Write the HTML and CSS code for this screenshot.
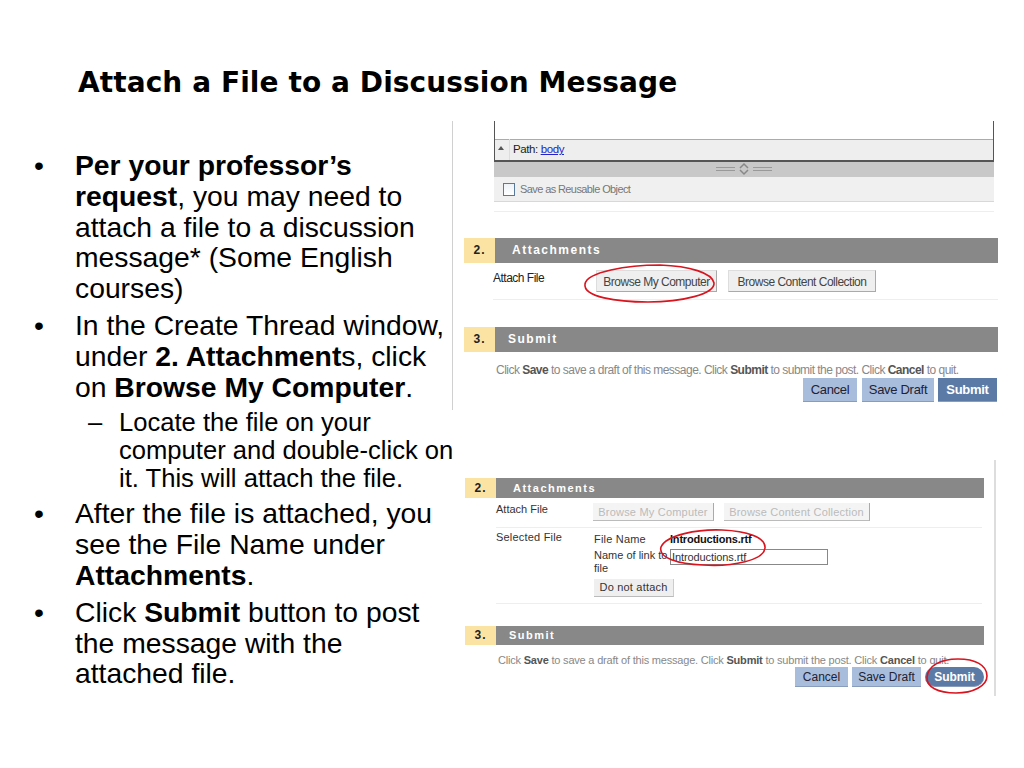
FILE: index.html
```html
<!DOCTYPE html>
<html lang="en">
<head>
<meta charset="utf-8">
<title>Attach a File to a Discussion Message</title>
<link rel="stylesheet" href="styles.css">
</head>
<body>
<main class="slide">
  <h1 class="title">Attach a File to a Discussion Message</h1>
  <div class="content">
    <ul class="bullets">
      <li><strong>Per your professor’s request</strong>, you may need to attach a file to a discussion message* (Some English courses)</li>
      <li>In the Create Thread window, under <strong>2. Attachment</strong>s, click on <strong>Browse My Computer</strong>.
        <ul class="sub"><li>Locate the file on your computer and double-click on it. This will attach the file.</li></ul>
      </li>
      <li>After the file is attached, you see the File Name under <strong>Attachments</strong>.</li>
      <li>Click <strong>Submit</strong> button to post the message with the attached file.</li>
    </ul>
  </div>

  <section class="shot shot-a">
    <div class="editor">
      <div class="path"><span class="tri"></span><span class="path-text">Path: <a>body</a></span></div>
      <div class="grip">
        <svg width="56" height="14" viewBox="0 0 56 14"><path d="M0 5.5h19M0 8.5h19M37 5.5h19M37 8.5h19" stroke="#999" fill="none"/><path d="M24 6l4-4 4 4M24 8l4 4 4-4" stroke="#888" stroke-width="1.5" fill="none"/></svg>
      </div>
      <div class="reuse"><span class="check"></span><span>Save as Reusable Object</span></div>
    </div>
    <div class="rule rule-a"></div>
    <div class="bar bar-a1"><span class="num">2.</span><span class="bar-title">Attachments</span></div>
    <div class="row-a"><span class="attach-label">Attach File</span><span class="btn btn-1">Browse My Computer</span><span class="btn btn-2">Browse Content Collection</span></div>
    <div class="bar bar-a2"><span class="num">3.</span><span class="bar-title t-sub">Submit</span></div>
    <p class="hint">Click <b>Save</b> to save a draft of this message. Click <b>Submit</b> to submit the post. Click <b>Cancel</b> to quit.</p>
    <div class="actions"><span class="act act-c">Cancel</span><span class="act act-s">Save Draft</span><span class="act act-p">Submit</span></div>
    <svg class="ring ring-a" width="136" height="42" viewBox="0 0 136 42"><path d="M3 21C5 9 45 2 78 2c30 1 52 8 54 18 1 11-32 19-66 19C35 39 1 34 3 21z" fill="none" stroke="#d8141e" stroke-width="1.6"/></svg>
  </section>

  <section class="shot shot-b">
    <div class="bar bar-b1"><span class="num">2.</span><span class="bar-title">Attachments</span></div>
    <div class="row-b1"><span class="lab">Attach File</span><span class="dis dis-1">Browse My Computer</span><span class="dis dis-2">Browse Content Collection</span></div>
    <div class="row-b2">
      <span class="lab">Selected File</span>
      <div class="file-grid">
        <span>File Name</span><strong class="fname">Introductions.rtf</strong>
        <span class="link-label">Name of link to file</span><span class="field">Introductions.rtf</span>
      </div>
      <span class="dna">Do not attach</span>
    </div>
    <div class="bar bar-b2"><span class="num">3.</span><span class="bar-title t-sub">Submit</span></div>
    <p class="hint hint-b">Click <b>Save</b> to save a draft of this message. Click <b>Submit</b> to submit the post. Click <b>Cancel</b> to quit.</p>
    <div class="actions actions-b"><span class="act act-c">Cancel</span><span class="act act-s">Save Draft</span><span class="act act-p act-round">Submit</span></div>
    <svg class="ring ring-b" width="110" height="42" viewBox="0 0 110 42"><path d="M3 20C8 8 40 2 64 3c24 1 44 7 43 18-1 12-32 19-62 17C20 37 0 31 3 20z" fill="none" stroke="#d8141e" stroke-width="1.6"/></svg>
    <svg class="ring ring-c" width="64" height="38" viewBox="0 0 64 38"><path d="M2 20C3 9 15 2 33 2c17 0 29 6 29 17 0 10-14 17-31 17C13 36 1 30 2 20z" fill="none" stroke="#d8141e" stroke-width="1.6"/></svg>
  </section>
</main>
</body>
</html>
```
FILE: styles.css
```css
* { box-sizing: border-box; }
html, body { margin: 0; background: #fff; }
.slide { position: relative; width: 1024px; height: 768px; overflow: hidden; font-family: "Liberation Sans", Arial, sans-serif; color: #000; }
.title { margin: 0; padding: 67px 0 0 78px; font: bold 28px/32px "DejaVu Sans", Verdana, sans-serif; letter-spacing: .08px; white-space: nowrap; }
.content { padding: 51px 0 0 34px; width: 450px; }
.bullets { margin: 0; padding: 0; list-style: none; font-size: 28.3px; line-height: 30.8px; }
.bullets > li { position: relative; padding-left: 41px; margin-bottom: 6px; }
.bullets > li::before { content: "•"; position: absolute; left: 0; }
.sub { margin: 6px -10px 0 0; padding: 0; list-style: none; font-size: 25.6px; line-height: 28px; }
.sub li { position: relative; padding-left: 44px; }
.sub li::before { content: "–"; position: absolute; left: 13px; }

.shot { position: absolute; font-size: 12px; color: #333; }
.shot-a { left: 452px; top: 121px; width: 546px; height: 289px; border-left: 1px solid #d0d0d0; }
.shot-b { left: 465px; top: 460px; width: 531px; height: 236px; border-right: 2px solid #ddd; font-size: 11px; }

.editor { margin: 0 4px 0 41px; height: 82px; }
.path { height: 41px; display: flex; align-items: flex-end; border: solid #555; border-width: 0 1px 2px; color: #222; background: linear-gradient(#fff 18px, #ababab 18px, #ababab 19px, #eee 19px); }
.tri { width: 0; height: 0; border: 3px solid transparent; border-bottom: 4px solid #555; border-top: 0; margin: 0 5px 10px 3px; }
.path-text { height: 21px; padding-left: 3px; line-height: 20px; border-left: 1px solid #ddd; flex: 1; font-size: 11.5px; letter-spacing: -.4px; }
.path-text a { color: #2323c8; text-decoration: underline; }
.grip { height: 15px; background: #c8c8c8; display: flex; justify-content: center; }
.reuse { height: 25px; background: #f0f0f0; border-bottom: 1px solid #d8d8d8; display: flex; align-items: center; gap: 5px; padding-left: 9px; color: #777; font-size: 11px; letter-spacing: -.6px; }
.check { width: 12px; height: 13px; border: 1px solid #5a7a9c; background: linear-gradient(#eef3f8, #fff); }
.rule { height: 1px; background: #eee; }
.rule-a { margin: 8px 4px 0 41px; }

.bar { display: flex; background: #888; font-weight: bold; letter-spacing: 1.5px; }
.num { flex: none; width: 31px; background: #fbe3a4; color: #222; text-align: center; letter-spacing: 1px; }
.bar-title { color: #fff; padding-left: 17px; }
.t-sub { padding-left: 13px; }
.bar-a1 { margin: 26px 0 0 11px; height: 25px; line-height: 25px; }
.row-a { display: flex; align-items: flex-start; height: 37px; margin-left: 40px; border-bottom: 1px solid #eee; width: 505px; padding-top: 7px; color: #222; }
.attach-label { width: 103px; font-size: 12px; line-height: 16px; letter-spacing: -.5px; }
.btn { height: 22px; line-height: 22px; text-align: center; background: #efefef; border: 1px solid #ddd; border-bottom-color: #aaa; border-right-color: #aaa; color: #444; white-space: nowrap; letter-spacing: -.5px; }
.btn-1 { width: 121px; margin-right: 11px; }
.btn-2 { width: 148px; }
.bar-a2 { margin: 27px 0 0 11px; height: 25px; line-height: 25px; }
.hint { margin: 10px 0 0 43px; color: #888; font-size: 12px; line-height: 16px; white-space: nowrap; letter-spacing: -.52px; }
.hint b { color: #555; }
.actions { display: flex; justify-content: flex-end; gap: 5px; margin-right: 1px; }
.act { height: 24px; line-height: 24px; text-align: center; font-size: 13px; letter-spacing: -.3px; background: #a8bcdc; color: #223; border-bottom: 1px solid #8a9cbc; }
.act-c { width: 54px; }
.act-s { width: 72px; }
.act-p { width: 59px; margin-left: -1px; background: #5b7ba6; color: #fff; font-weight: bold; }
.ring { position: absolute; }
.ring-a { left: 129px; top: 142px; }

.bar-b1 { margin-top: 18px; height: 20px; line-height: 20px; font-size: 11px; width: 519px; }
.bar-b1 .num, .bar-b2 .num { width: 31px; font-size: 12px; }
.lab { width: 97px; margin-left: 31px; flex: none; }
.row-b1 { display: flex; height: 29px; padding-top: 5px; margin-right: 12px; }
.dis { height: 18px; line-height: 18px; text-align: center; background: #f4f4f4; color: #bbb; border-right: 1px solid #aaa; border-bottom: 1px solid #bbb; white-space: nowrap; letter-spacing: .2px; }
.dis-1 { width: 121px; margin-right: 10px; }
.dis-2 { width: 146px; }
.row-b2 { position: relative; height: 77px; margin: 0 12px 0 31px; border-top: 1px solid #eee; border-bottom: 1px solid #eee; padding: 2px 0 0 98px; line-height: 13px; letter-spacing: .2px; }
.row-b2 .lab { position: absolute; left: 0; top: 3px; margin: 0; }
.file-grid { display: grid; grid-template-columns: 76px auto; row-gap: 3px; width: 240px; align-items: start; padding-top: 3px; }
.fname { color: #111; letter-spacing: -.2px; }
.link-label { width: 76px; line-height: 13px; letter-spacing: 0; }
.field { width: 158px; height: 16px; line-height: 15px; border: 1px solid #888; padding-left: 1px; letter-spacing: -.1px; }
.dna { position: absolute; left: 98px; top: 51px; width: 80px; height: 18px; line-height: 17px; text-align: center; background: #efefef; border-bottom: 1px solid #bbb; border-right: 1px solid #ccc; }
.bar-b2 { margin-top: 22px; height: 19px; line-height: 19px; font-size: 11px; width: 519px; }
.hint-b { margin: 9px 0 0 33px; font-size: 11px; line-height: 13px; letter-spacing: -.2px; }
.actions-b { gap: 4px; margin-right: 10px; }
.actions-b .act { height: 20px; line-height: 20px; font-size: 12px; letter-spacing: 0; }
.actions-b .act-c { width: 53px; }
.actions-b .act-s { width: 69px; }
.actions-b .act-p { width: 59px; margin-left: 0; }
.act-round { border-radius: 10px; }
.ring-b { left: 193px; top: 67px; }
.ring-c { left: 460px; top: 197px; }
```
